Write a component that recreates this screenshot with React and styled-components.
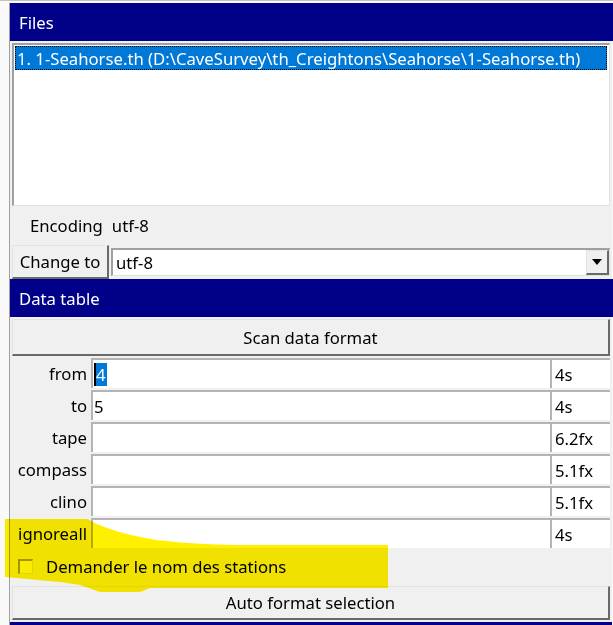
import React from "react";
import styled, { createGlobalStyle } from "styled-components";

const GlobalStyle = createGlobalStyle`
  body {
    margin: 0;
    background: #f9f9f9;
    font-family: "Noto Sans", "DejaVu Sans", sans-serif;
    font-size: 16.7px;
    color: #000;
  }
`;

const fields = [
  { name: "from", value: "4", format: "4s", selected: true },
  { name: "to", value: "5", format: "4s" },
  { name: "tape", value: "", format: "6.2fx" },
  { name: "compass", value: "", format: "5.1fx" },
  { name: "clino", value: "", format: "5.1fx" },
  { name: "ignoreall", value: "", format: "4s" },
];

function App() {
  return (
    <>
      <GlobalStyle />
      <Page>
        <Panel>
          <Header>Files</Header>
          <ListBox>
            <ListItem>
              1. 1-Seahorse.th (D:\CaveSurvey\th_Creightons\Seahorse\1-Seahorse.th)
            </ListItem>
          </ListBox>
          <EncodingRow>
            <span>Encoding</span>
            <span>utf-8</span>
          </EncodingRow>
          <ChangeRow>
            <SmallButton>Change to</SmallButton>
            <Combo>
              <ComboText>utf-8</ComboText>
              <DropButton>
                <svg width="10" height="6" viewBox="0 0 10 6">
                  <path d="M0 0 H10 L5 6 Z" fill="#000" />
                </svg>
              </DropButton>
            </Combo>
          </ChangeRow>
          <Header>Data table</Header>
          <WideButton height={37}>Scan data format</WideButton>
          <Table>
            {fields.map((f) => (
              <FieldRow key={f.name}>
                <FieldLabel>{f.name}</FieldLabel>
                <Entry>
                  {f.selected ? <Selected>{f.value}</Selected> : f.value}
                </Entry>
                <FormatCell>{f.format}</FormatCell>
              </FieldRow>
            ))}
          </Table>
          <CheckRow>
            <CheckBox />
            <span>Demander le nom des stations</span>
          </CheckRow>
          <WideButton height={34}>Auto format selection</WideButton>
          <FooterStrip />
        </Panel>
        <Highlight width="613" height="625" viewBox="0 0 613 625">
          <path
            d="M5 518 L88 518 C96 524 120 533 156 539 C190 543 220 544 250 544 L388 544
               L388 587 L150 587 L140 591 L100 591 L80 584 L60 581 L5 576 Z"
            fill="#fff000"
          />
        </Highlight>
      </Page>
    </>
  );
}

const Page = styled.div`
  position: relative;
  width: 613px;
  height: 625px;
  overflow: hidden;
  padding-top: 2px;
  box-sizing: border-box;
  border-top: 1px solid #c4c4c4;
`;

const Panel = styled.div`
  margin-left: 9px;
  width: 602px;
  background: #f0f0f0;
  border-left: 1px solid #a0a0a0;
`;

const Header = styled.div`
  height: 38px;
  background: #000088;
  color: #fff;
  display: flex;
  align-items: center;
  padding-left: 9px;
  margin-right: -2px;
`;

const ListBox = styled.div`
  margin: 2px 2px 0;
  height: 163px;
  background: #fff;
  box-sizing: border-box;
  border-style: solid;
  border-width: 2px 1px 1px 2px;
  border-color: #a0a0a0 #e3e3e3 #e3e3e3 #a0a0a0;
  padding: 1px 2px 0 1px;
`;

const ListItem = styled.div`
  height: 24px;
  background: #0078d7;
  color: #fff;
  border: 1px dotted #000;
  box-sizing: border-box;
  padding-left: 1px;
  display: flex;
  align-items: center;
  white-space: nowrap;
  overflow: hidden;
`;

const EncodingRow = styled.div`
  height: 38px;
  display: flex;
  align-items: center;
  gap: 9px;
  padding-left: 20px;
`;

const ChangeRow = styled.div`
  height: 35px;
  display: flex;
  align-items: center;
  padding: 0 2px;
  gap: 2px;
`;

const raised = `
  background: #f0f0f0;
  box-sizing: border-box;
  border-style: solid;
  border-width: 1px 2px 2px 1px;
  border-color: #e3e3e3 #696969 #696969 #e3e3e3;
`;

const SmallButton = styled.div`
  ${raised}
  width: 97px;
  height: 34px;
  display: flex;
  align-items: center;
  justify-content: center;
`;

const Combo = styled.div`
  flex: 1;
  height: 28px;
  background: #fff;
  box-sizing: border-box;
  border-style: solid;
  border-width: 2px 1px 1px 2px;
  border-color: #a0a0a0 #e3e3e3 #e3e3e3 #a0a0a0;
  display: flex;
  align-items: center;
`;

const ComboText = styled.span`
  flex: 1;
  padding-left: 3px;
`;

const DropButton = styled.div`
  ${raised}
  width: 23px;
  height: 100%;
  display: flex;
  align-items: center;
  justify-content: center;
`;

const WideButton = styled.div`
  ${raised}
  margin: 2px 2px 0;
  height: ${(p) => p.height}px;
  display: flex;
  align-items: center;
  justify-content: center;
`;

const Table = styled.div`
  display: flex;
  flex-direction: column;
  gap: 2px;
  padding: 2px 2px 0;
`;

const FieldRow = styled.div`
  display: grid;
  grid-template-columns: 79px 459px 60px;
  height: 30px;
`;

const FieldLabel = styled.div`
  display: flex;
  align-items: center;
  justify-content: flex-end;
  padding-right: 4px;
`;

const Entry = styled.div`
  background: #fff;
  box-sizing: border-box;
  border-style: solid;
  border-width: 2px 0 0 2px;
  border-color: #b4b4b4;
  display: flex;
  align-items: center;
  padding-left: 1px;
`;

const FormatCell = styled(Entry)`
  padding-left: 3px;
`;

const Selected = styled.span`
  background: #0078d7;
  color: #fff;
  border-left: 2px solid #000;
  padding-right: 1px;
`;

const CheckRow = styled.div`
  height: 36px;
  display: flex;
  align-items: center;
  padding-left: 8px;
  gap: 13px;
`;

const CheckBox = styled.div`
  width: 15px;
  height: 15px;
  box-sizing: border-box;
  background: #fafafa;
  border-style: solid;
  border-width: 2px 1px 1px 2px;
  border-color: #a0a0a0 #e3e3e3 #e3e3e3 #a0a0a0;
`;

const FooterStrip = styled.div`
  height: 4px;
  margin-top: 2px;
  background: #000088;
`;

const Highlight = styled.svg`
  position: absolute;
  left: 0;
  top: 0;
  pointer-events: none;
  mix-blend-mode: multiply;
`;

export default App;
